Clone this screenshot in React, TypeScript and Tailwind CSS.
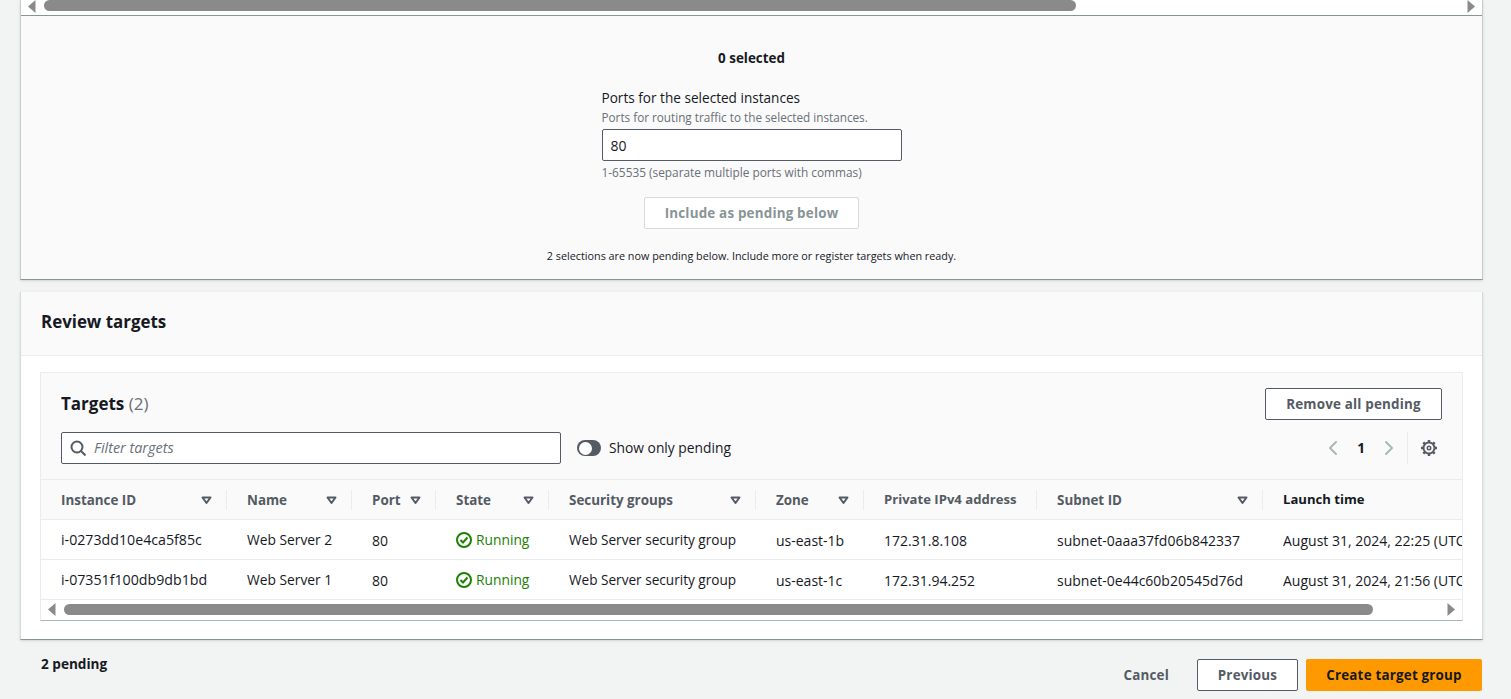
import { ChevronLeft, ChevronRight } from "lucide-react";

const FONT = "font-['Open_Sans','Noto_Sans',sans-serif]";

const COLUMNS = [
  { label: "Instance ID", sortable: true, size: "" },
  { label: "Name", sortable: true, size: "" },
  { label: "Port", sortable: true, size: "" },
  { label: "State", sortable: true, size: "" },
  { label: "Security groups", sortable: true, size: "" },
  { label: "Zone", sortable: true, size: "" },
  { label: "Private IPv4 address", sortable: false, size: "text-[13.1px]" },
  { label: "Subnet ID", sortable: true, size: "" },
  { label: "Launch time", sortable: false, size: "text-[13.1px] text-[#16191f]" },
];

const ROWS = [
  {
    id: "i-0273dd10e4ca5f85c",
    name: "Web Server 2",
    zone: "us-east-1b",
    ip: "172.31.8.108",
    subnet: "subnet-0aaa37fd06b842337",
    launch: "August 31, 2024, 22:25 (UTC-04:00)",
  },
  {
    id: "i-07351f100db9db1bd",
    name: "Web Server 1",
    zone: "us-east-1c",
    ip: "172.31.94.252",
    subnet: "subnet-0e44c60b20545d76d",
    launch: "August 31, 2024, 21:56 (UTC-04:00)",
  },
];

const GRID = "grid grid-cols-[186px_125px_84px_113px_207px_108px_173px_226px_260px] w-max";
const BUTTON_TEXT = "text-[13.4px] font-bold tracking-[0.2px]";

function ScrollArrow({ dir }: { dir: "left" | "right" }) {
  return (
    <svg width="8" height="14" viewBox="0 0 8 14" className="shrink-0" fill="#8a8a8a">
      <path d={dir === "left" ? "M7.5 0v13L0 6.5z" : "M.5 0v13L8 6.5z"} />
    </svg>
  );
}

function SortIcon() {
  return (
    <svg width="11" height="9" viewBox="0 0 11 9" className="shrink-0" fill="none" stroke="#545b64" strokeWidth="2">
      <path d="M1.5 1.5h8L5.5 7z" strokeLinejoin="round" />
    </svg>
  );
}

function RunningIcon() {
  return (
    <svg width="16" height="16" viewBox="0 0 16 16" className="shrink-0" fill="none" stroke="#1d8102" strokeWidth="2">
      <circle cx="8" cy="8" r="7" />
      <path d="M4.5 8l2.5 2.5 4.5-5" />
    </svg>
  );
}

function SearchIcon() {
  return (
    <svg width="16" height="16" viewBox="0 0 16 16" className="shrink-0" fill="none" stroke="#545b64" strokeWidth="2">
      <circle cx="7" cy="7" r="5.5" />
      <path d="M11 11l4.5 4.5" />
    </svg>
  );
}

function GearIcon() {
  return (
    <svg width="16" height="16" viewBox="0 0 16 16" className="shrink-0" fill="none" stroke="#545b64">
      <circle cx="8" cy="8" r="5.5" strokeWidth="2" />
      <circle cx="8" cy="8" r="1.75" strokeWidth="1.5" />
      <path strokeWidth="2.5" d="M8 0v2.5M8 13.5V16M0 8h2.5M13.5 8H16M2.3 2.3l1.8 1.8M11.9 11.9l1.8 1.8M2.3 13.7l1.8-1.8M11.9 4.1l1.8-1.8" />
    </svg>
  );
}

export default function App() {
  return (
    <div className={`${FONT} h-[699px] overflow-hidden bg-[#f2f3f3] px-5 text-[13.6px] text-[#16191f]`}>
      {/* Available instances, bottom part */}
      <section className="w-[1463px] border-x border-b border-[#c5cccf] border-b-[#879596] bg-[#fafafa] shadow-sm">
        <div className="flex h-[16px] items-start justify-between border-b border-[#879596] bg-white pl-[7px] pr-[7px]">
          <div className="flex items-start gap-[8px]">
            <ScrollArrow dir="left" />
            <div className="h-[11px] w-[1032px] rounded-full bg-[#8a8a8a]" />
          </div>
          <ScrollArrow dir="right" />
        </div>
        <div className="flex h-[263px] flex-col items-center pt-[33px]">
          <p className="text-[13.4px] font-bold leading-[18px]">0 selected</p>
          <div className="mt-[22px] w-[300px]">
            <p className="leading-[18px]">Ports for the selected instances</p>
            <p className="mt-[2px] text-[11.72px] leading-[16px] text-[#687078]">Ports for routing traffic to the selected instances.</p>
            <div className="mt-[4px] flex h-[32px] items-center rounded-[2px] border border-[#545b64] bg-white px-2 text-[14px]">80</div>
            <p className="mt-[3px] text-[11.85px] leading-[16px] text-[#687078]">1-65535 (separate multiple ports with commas)</p>
          </div>
          <button className={`mt-[17px] h-[32px] w-[215px] rounded-[2px] border border-[#d5dbdb] bg-white text-[#879596] ${BUTTON_TEXT}`}>
            Include as pending below
          </button>
          <p className="mt-[19px] text-[10.8px] leading-[16px]">2 selections are now pending below. Include more or register targets when ready.</p>
        </div>
      </section>

      {/* Review targets */}
      <section className="mt-[12px] w-[1463px] border-x border-b border-[#d5dbdb] border-b-[#879596] bg-white shadow-sm">
        <div className="flex h-[64px] items-center border-b border-[#eaeded] bg-[#fafafa] px-5 pb-[3px] text-[16.9px] font-bold">Review targets</div>
        <div className="px-[19px] pt-[16px]">
          <div className="h-[249px] overflow-hidden border border-[#eaeded] border-b-[#aab7b8]">
            <div className="h-[107px] border-b border-[#eaeded] bg-[#fafafa] pl-5 pr-5">
              <div className="flex h-[59px] items-center justify-between">
                <h2 className="mt-[3px] text-[17px] font-bold">
                  Targets <span className="font-normal text-[#687078]">(2)</span>
                </h2>
                <button className={`mt-[3px] h-[32px] w-[177px] rounded-[2px] border border-[#545b64] bg-white text-[#545b64] ${BUTTON_TEXT}`}>
                  Remove all pending
                </button>
              </div>
              <div className="flex h-[32px] items-center">
                <div className="flex h-[32px] w-[500px] items-center gap-[7px] rounded-[2px] border border-[#545b64] bg-white pl-[8px]">
                  <SearchIcon />
                  <span className="ml-[1px] text-[14.4px] italic text-[#687078]">Filter targets</span>
                </div>
                <div className="ml-4 flex items-center gap-2">
                  <div className="flex h-[16px] w-[24px] items-center rounded-full bg-[#545b64] pl-[1.5px]">
                    <div className="h-[13px] w-[13px] rounded-full bg-white" />
                  </div>
                  <span className="text-[13.8px]">Show only pending</span>
                </div>
                <div className="ml-auto flex items-center">
                  <ChevronLeft size={24} color="#aab7b8" strokeWidth={2} />
                  <span className="mx-[12px] font-bold">1</span>
                  <ChevronRight size={24} color="#aab7b8" strokeWidth={2} />
                  <div className="ml-[6px] mr-[13px] h-[32px] w-px bg-[#eaeded]" />
                  <GearIcon />
                  <div className="w-[5px]" />
                </div>
              </div>
            </div>
            <div className={`${GRID} h-[40px] items-center border-b border-[#eaeded] bg-[#fafafa] pt-[1px] text-[13.4px] font-bold text-[#545b64]`}>
              {COLUMNS.map((col) => (
                <div key={col.label} className="flex h-[20px] items-center justify-between whitespace-nowrap pl-5 pr-[14px] [&:not(:last-child)]:border-r [&:not(:last-child)]:border-[#eaeded]">
                  <span className={col.size}>{col.label}</span>
                  {col.sortable && <SortIcon />}
                </div>
              ))}
            </div>
            {ROWS.map((row) => (
              <div key={row.id} className={`${GRID} h-[40px] items-center border-b border-[#eaeded] bg-white pt-[1px] text-[14px]`}>
                <div className="pl-5 text-[14.2px]">{row.id}</div>
                <div className="pl-5 text-[13.8px]">{row.name}</div>
                <div className="pl-5">80</div>
                <div className="flex items-center gap-[4px] pl-5 text-[13.8px] text-[#1d8102]">
                  <RunningIcon />
                  Running
                </div>
                <div className="pl-5 text-[13.6px]">Web Server security group</div>
                <div className="pl-5">{row.zone}</div>
                <div className="pl-5">{row.ip}</div>
                <div className="pl-5">{row.subnet}</div>
                <div className="whitespace-nowrap pl-5">{row.launch}</div>
              </div>
            ))}
            <div className="flex h-[19px] items-center justify-between px-[7px]">
              <div className="flex items-center gap-[8px]">
                <ScrollArrow dir="left" />
                <div className="h-[11px] w-[1309px] rounded-full bg-[#8a8a8a]" />
              </div>
              <ScrollArrow dir="right" />
            </div>
          </div>
        </div>
        <div className="h-[18px]" />
      </section>

      {/* Wizard footer */}
      <footer className="flex w-[1462px] items-start justify-between pl-[21px] pt-[14px]">
        <p className="text-[13.6px] font-bold leading-[20px]">2 pending</p>
        <div className="mt-[5px] flex items-center">
          <span className={`mr-[28px] text-[#545b64] ${BUTTON_TEXT}`}>Cancel</span>
          <button className={`h-[32px] w-[101px] rounded-[2px] border border-[#545b64] bg-white text-[#545b64] ${BUTTON_TEXT}`}>Previous</button>
          <button className={`ml-2 h-[32px] w-[176px] rounded-[2px] bg-[#ff9900] text-[#16191f] ${BUTTON_TEXT}`}>Create target group</button>
        </div>
      </footer>
    </div>
  );
}
